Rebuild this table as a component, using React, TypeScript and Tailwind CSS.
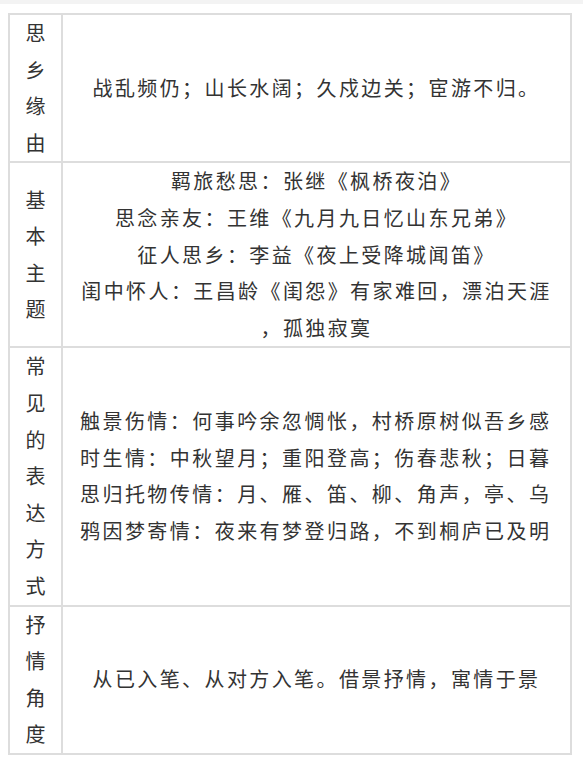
import React from "react";

const rows: { label: string; lines: string[]; align: "center" | "left" }[] = [
  { label: "思乡缘由", lines: ["战乱频仍；山长水阔；久戍边关；宦游不归。"], align: "center" },
  {
    label: "基本主题",
    lines: [
      "羁旅愁思：张继《枫桥夜泊》",
      "思念亲友：王维《九月九日忆山东兄弟》",
      "征人思乡：李益《夜上受降城闻笛》",
      "闺中怀人：王昌龄《闺怨》有家难回，漂泊天涯",
      "，孤独寂寞",
    ],
    align: "center",
  },
  {
    label: "常见的表达方式",
    lines: [
      "触景伤情：何事吟余忽惆怅，村桥原树似吾乡感",
      "时生情：中秋望月；重阳登高；伤春悲秋；日暮",
      "思归托物传情：月、雁、笛、柳、角声，亭、乌",
      "鸦因梦寄情：夜来有梦登归路，不到桐庐已及明",
    ],
    align: "left",
  },
  { label: "抒情角度", lines: ["从已入笔、从对方入笔。借景抒情，寓情于景"], align: "center" },
];

export default function App() {
  return (
    <div
      className="w-[583px] h-[768px] bg-white overflow-hidden text-[#333] text-[20px] leading-[36.6px]"
      style={{ fontFamily: '"Noto Sans CJK SC", "Noto Sans", sans-serif' }}
    >
      <div className="h-[4px] bg-[#f3f3f3]" />
      <div className="ml-[8px] mt-[9px] w-[564px] border-l-2 border-t-2 border-[#dddddd]">
        {rows.map((r) => (
          <div key={r.label} className="flex">
            <div className="w-[53px] shrink-0 border-r-2 border-b-2 border-[#dddddd] flex flex-col items-center justify-center">
              {Array.from(r.label).map((c, i) => (
                <div key={i} className="text-center">
                  {c}
                </div>
              ))}
            </div>
            <div
              className={
                r.align === "center"
                  ? "flex-1 border-r-2 border-b-2 border-[#dddddd] flex flex-col items-center justify-center tracking-[2.4px] text-center"
                  : "flex-1 border-r-2 border-b-2 border-[#dddddd] flex flex-col items-start justify-center tracking-[2.45px] text-left pl-[17px]"
              }
            >
              {r.lines.map((l, i) => (
                <div key={i} className="whitespace-nowrap">
                  {l}
                </div>
              ))}
            </div>
          </div>
        ))}
      </div>
    </div>
  );
}
